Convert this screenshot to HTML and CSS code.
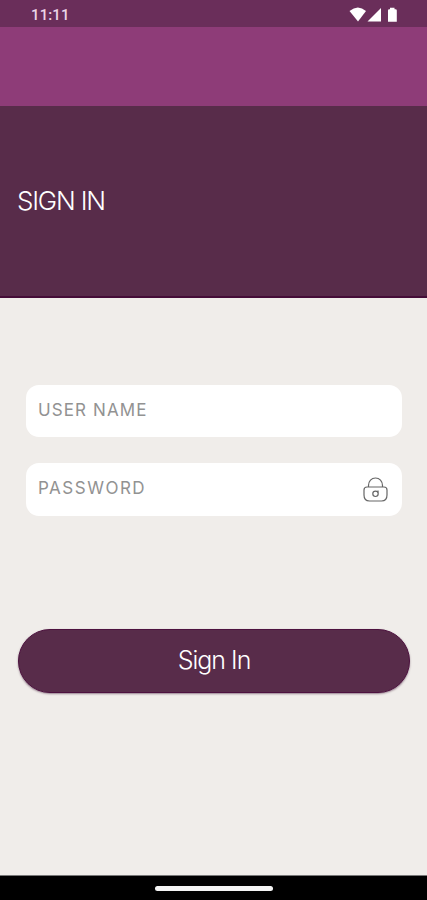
FILE: index.html
```html
<!DOCTYPE html>
<html lang="en">

<head>
  <meta charset="UTF-8">
  <meta name="viewport" content="width=device-width, initial-scale=1.0">
  <title>Sign In</title>
  <link rel="stylesheet" href="styles.css">
</head>

<body>
  <div class="status-bar">
    <span class="clock">11:11</span>
    <svg class="status-icons" width="50" height="16" viewBox="0 0 50 16" fill="#fff">
      <path d="M0.500 4 Q9 -3 17 4 L9 14.500 Z" />
      <path d="M18.500 14.500 L32 1 V14.500 Z" />
      <path d="M39 3.500 Q39 2.200 40.200 2.200 H41 V0.800 H45.500 V2.200 H46.500 Q47.800 2.200 47.800 3.500 V14.800 H39 Z" />
    </svg>
  </div>
  <div class="toolbar"></div>

  <header class="banner">
    <h1>SIGN IN</h1>
  </header>

  <main>
    <form>
      <div class="field">
        <input type="text" name="username" placeholder="USER NAME" aria-label="User name">
      </div>
      <div class="field password">
        <input type="password" name="password" placeholder="PASSWORD" aria-label="Password">
        <svg class="lock" width="26" height="26" viewBox="0 0 26 26" fill="none" stroke="#666" stroke-width="1.200">
          <path d="M5.500 10 V8.500 C5.500 4 8.500 1 12.500 1 S19.500 4 19.500 8.500 V10" />
          <path d="M4 10 H21 Q24 10 24 13 V18 Q24 24 18.500 24 H6.500 Q1 24 1 18 V13 Q1 10 4 10 Z" />
          <circle cx="12.500" cy="16.800" r="2.700" />
          <path d="M15 13.500 V15.500" />
        </svg>
      </div>
      <button type="submit">Sign In</button>
    </form>
  </main>

  <footer class="nav-bar">
    <div class="handle"></div>
  </footer>
</body>

</html>
```
FILE: styles.css
```css
* {
  box-sizing: border-box;
}

body {
  margin: 0;
  height: 100vh;
  display: flex;
  flex-direction: column;
  overflow: hidden;
  background: #f0edea;
  font-family: Inter, "Liberation Sans", sans-serif;
}

.status-bar {
  height: 27px;
  padding: 2px 28px 0 31px;
  display: flex;
  align-items: center;
  justify-content: space-between;
  background: #6a2e5a;
}

.clock {
  color: #edd5e8;
  font: 500 15px Roboto, sans-serif;
  letter-spacing: 0.1px;
}

.toolbar {
  height: 79px;
  background: #8e3c78;
}

.banner {
  height: 192px;
  padding: 0 17px 2px;
  display: flex;
  align-items: center;
  background: #582c4a;
  border-bottom: 2px solid #450d38;
}

h1 {
  margin: 0;
  color: #fff;
  font-size: 26px;
  font-weight: 300;
  letter-spacing: -1.2px;
}

main {
  flex: 1;
  padding: 87px 17px 0 18px;
}

.field {
  height: 52px;
  margin: 0 8px 26px;
  padding: 0 13px 3px 12px;
  display: flex;
  align-items: center;
  background: #fff;
  border-radius: 13px;
}

.password {
  height: 53px;
}

input {
  flex: 1;
  min-width: 0;
  padding: 0;
  border: 0;
  outline: 0;
  background: none;
  font: 400 17px Inter, sans-serif;
  letter-spacing: 1.1px;
}

.password input {
  letter-spacing: 1.5px;
}

input::placeholder {
  color: #929292;
  opacity: 1;
}

.lock {
  margin-top: 4px;
}

button {
  display: block;
  width: 100%;
  height: 64px;
  margin-top: 113px;
  padding: 0 0 2px;
  border: 1px solid #4d123f;
  border-radius: 32px;
  background: #582c4a;
  box-shadow: 0 1px 2px rgba(60, 20, 50, 0.5);
  color: #fff;
  font: 300 25px Inter, sans-serif;
  letter-spacing: -1px;
}

.nav-bar {
  height: 25px;
  display: flex;
  align-items: center;
  justify-content: center;
  background: #000;
  border-top: 1px solid #777;
}

.handle {
  width: 118px;
  height: 5px;
  border-radius: 3px;
  background: #f4f4f4;
}
```
